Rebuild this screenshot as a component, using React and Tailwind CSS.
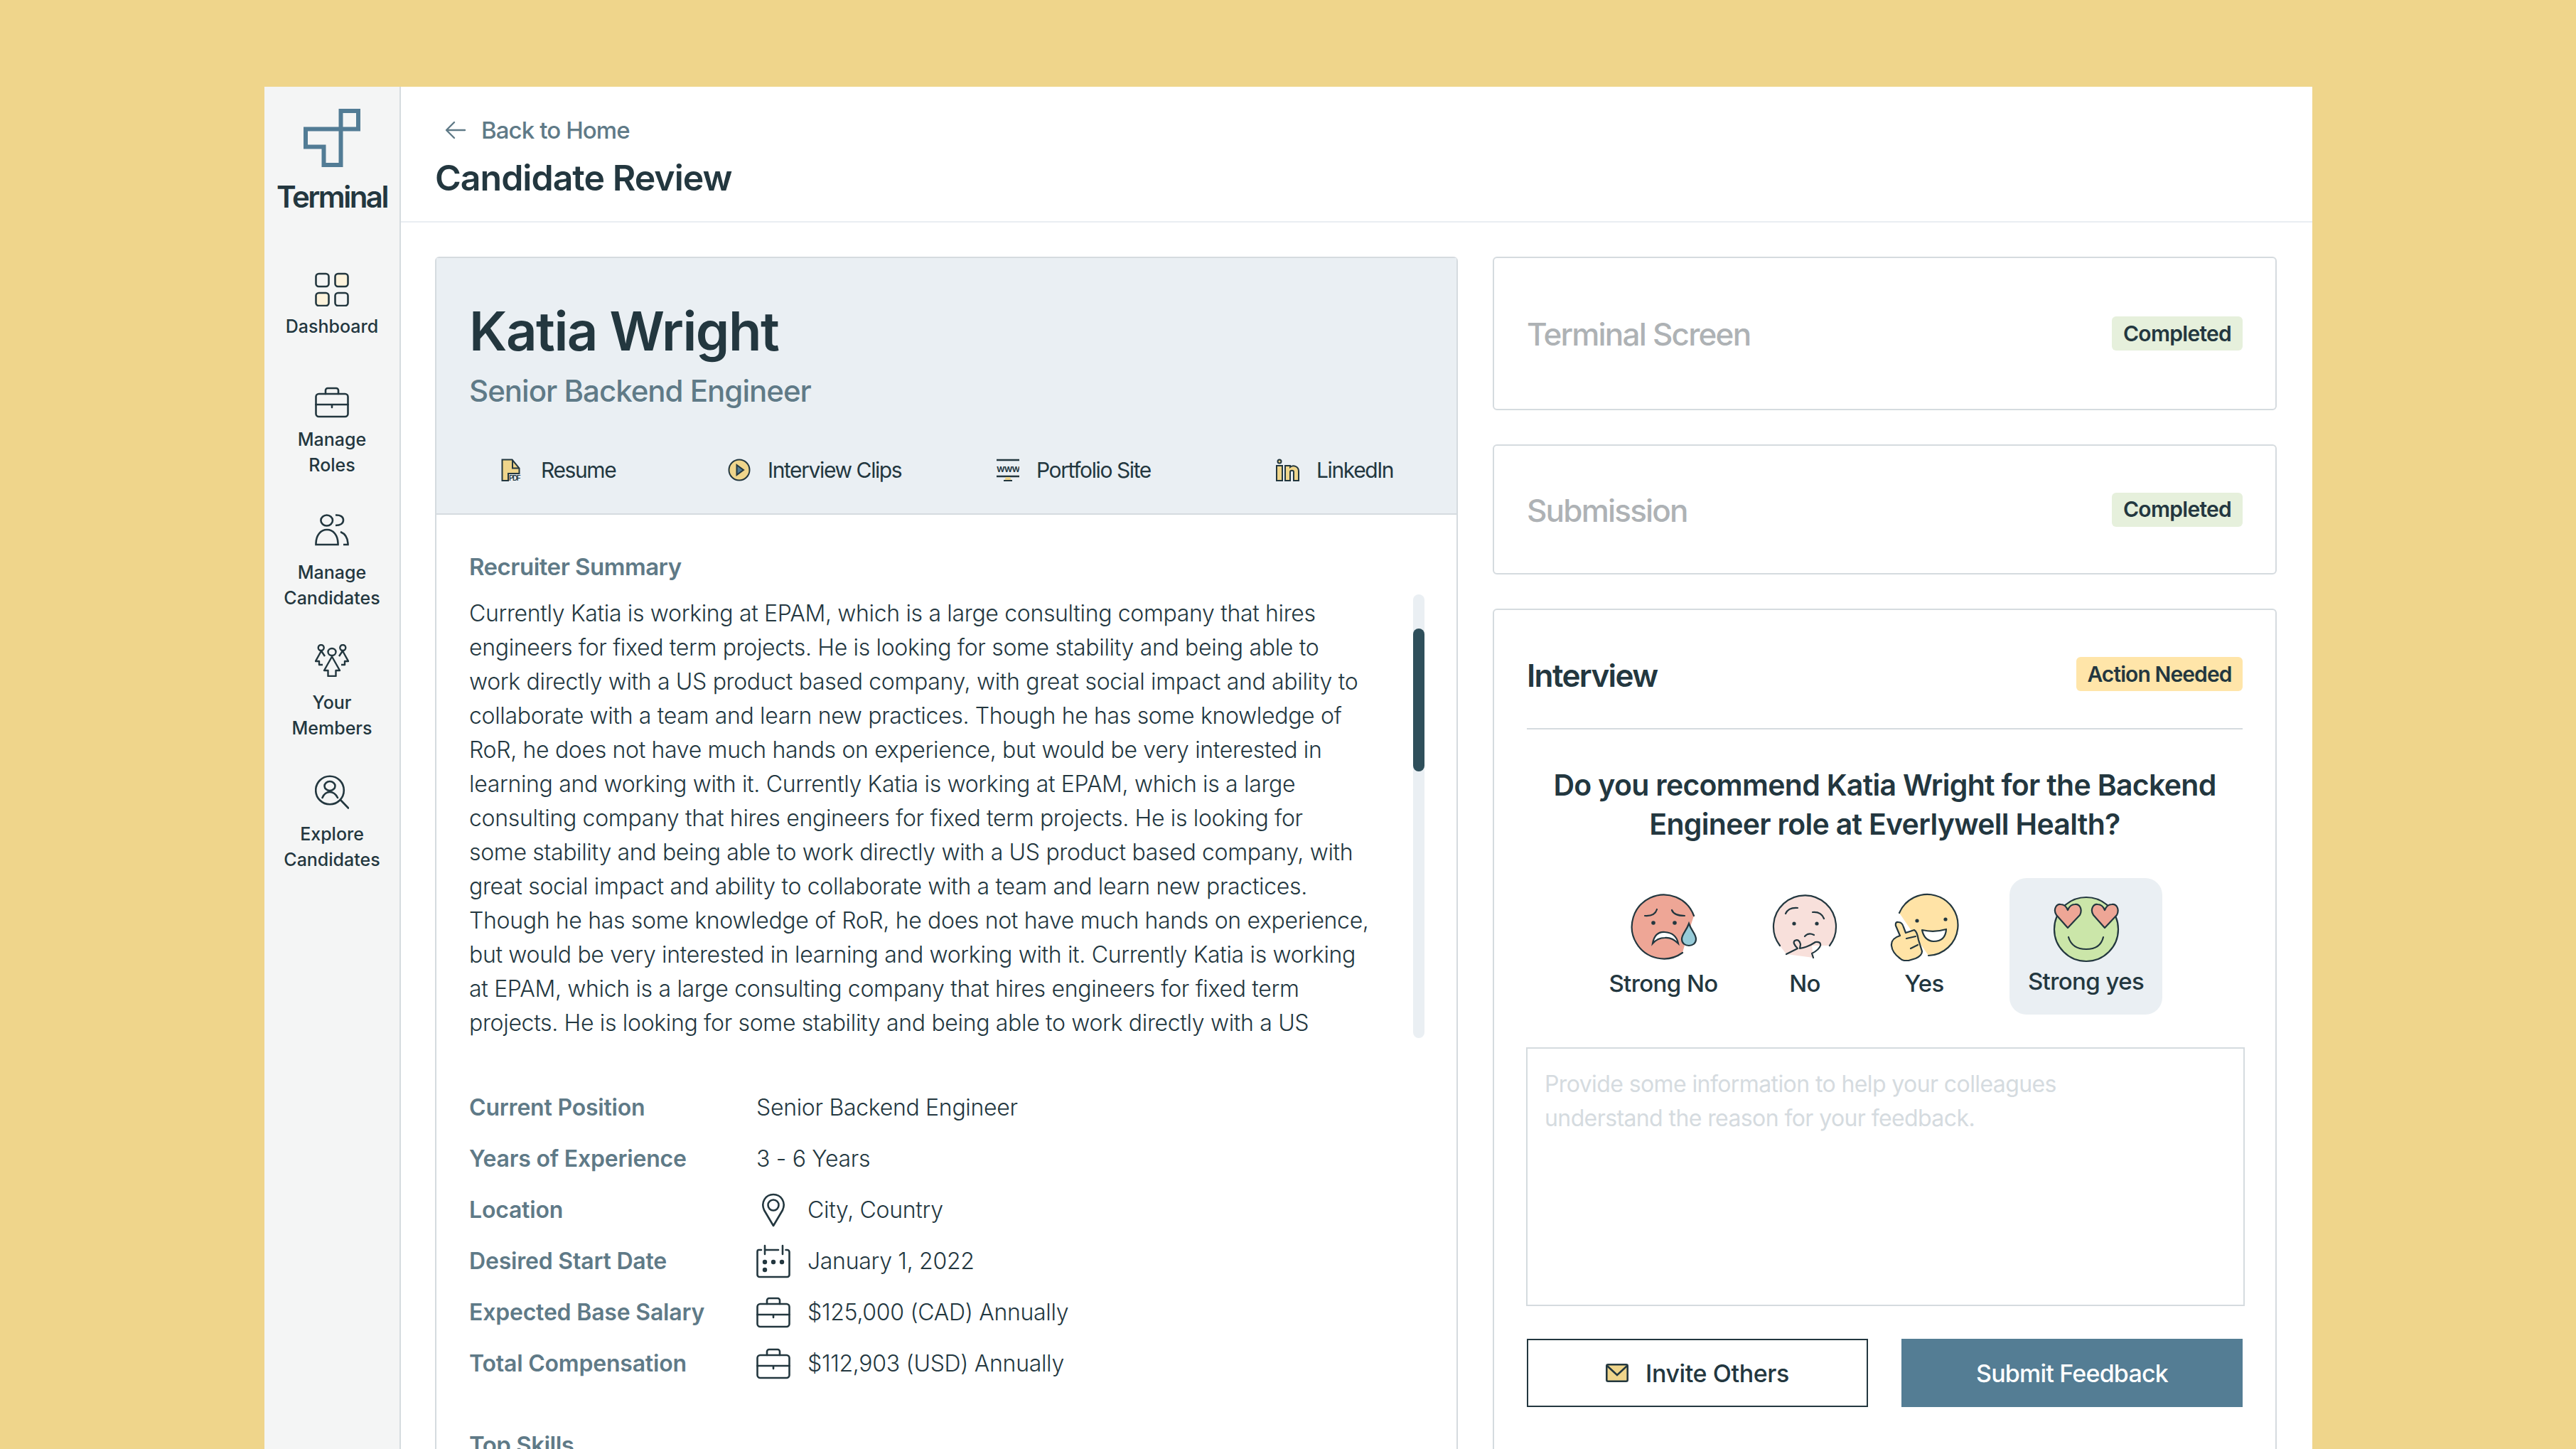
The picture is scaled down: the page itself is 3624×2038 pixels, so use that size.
const ink = '#23373f'
const yellow = '#efd58b'

const DashboardIcon = () => (
  <svg width="48" height="48" viewBox="0 0 48 48" fill="none" stroke={ink} strokeWidth="2.6">
    <rect x="1.5" y="2" width="18" height="18" rx="4" />
    <rect x="28.5" y="2" width="18" height="18" rx="4" fill="#fdf3dc" />
    <rect x="1.5" y="29" width="18" height="18" rx="4" fill="#fdf3dc" />
    <rect x="28.5" y="29" width="18" height="18" rx="4" />
  </svg>
)

const BriefcaseIcon = ({ size = 48 }) => (
  <svg width={size} height={size} viewBox="0 0 48 48" fill="none" stroke={ink} strokeWidth="2.6" strokeLinecap="round">
    <rect x="1.5" y="12" width="45" height="32" rx="4" />
    <path d="M15 12V7a3 3 0 0 1 3-3h12a3 3 0 0 1 3 3v5" />
    <path d="M1.5 27h45M24 27v4" />
  </svg>
)

const CandidatesIcon = () => (
  <svg width="48" height="46" viewBox="0 0 48 46" fill="none" stroke={ink} strokeWidth="2.6">
    <ellipse cx="16.7" cy="9" rx="8.300" ry="7.500" />
    <path d="M29 1.500C36 1 40 4 40 8.500S36 16 29 16" />
    <path d="M1.500 43V42C1.500 30 8 22 17 22S32.500 30 32.500 42V43Z" />
    <path d="M36 25C43 28 46.500 34 46.500 43H40" />
  </svg>
)

const MembersIcon = () => (
  <svg width="48" height="46" viewBox="0 0 48 46" fill="none" stroke={ink} strokeWidth="2.400" strokeLinejoin="round">
    <circle cx="8.700" cy="5" r="4" />
    <circle cx="39.300" cy="5" r="4" />
    <ellipse cx="24" cy="11" rx="5.500" ry="5" />
    <path d="M9 9.500 1 24H6V29H11M9 9.500 14 17" />
    <path d="M39 9.500 47 24H42V29H37M39 9.500 34 17" />
    <path d="M24 17.500 13 37H18.500V45H29.500V37H35Z" />
  </svg>
)

const ExploreIcon = () => (
  <svg width="48" height="48" viewBox="0 0 48 48" fill="none" stroke={ink} strokeWidth="2.600" strokeLinecap="round">
    <circle cx="21" cy="21.500" r="19.800" />
    <ellipse cx="21" cy="15.500" rx="7.500" ry="6.500" />
    <path d="M10.500 32C13 26 16 24 21 24S29 26 32 32" />
    <path d="M36 35 47 46.500" />
  </svg>
)

const Logo = () => (
  <svg width="80" height="82" viewBox="0 0 80 82" fill="none" stroke="#527c95" strokeWidth="6">
    <path d="M77 28.500V3H52.500V79H28.500V53.500H3V28.500Z" />
  </svg>
)

const BackArrow = () => (
  <svg width="30" height="26" viewBox="0 0 30 26" fill="none" stroke="#5f7a87" strokeWidth="2.400" strokeLinecap="round" strokeLinejoin="round">
    <path d="M28 13H3M13 2 2 13l11 11" />
  </svg>
)

const PdfIcon = () => (
  <svg width="32" height="32" viewBox="0 0 32 32" fill="none" stroke={ink} strokeWidth="2">
    <path d="M1.500 1.500h14l10 12V21H10v10H1.500z" fill={yellow} />
    <path d="M16 1.500v12h9" fill="none" />
    <text x="11" y="31" fontSize="10" fill={ink} stroke="none" fontFamily="Inter, sans-serif" fontWeight="600">PDF</text>
  </svg>
)

const PlayIcon = () => (
  <svg width="32" height="32" viewBox="0 0 32 32" stroke={ink} strokeWidth="2">
    <circle cx="16" cy="16" r="14.500" fill={yellow} />
    <path d="M12.500 9 22 16l-9.500 7z" fill="#527c95" />
  </svg>
)

const WwwIcon = () => (
  <svg width="32" height="32" viewBox="0 0 32 32" fill="none">
    <path d="M0 2h32M0 25h32" stroke={ink} strokeWidth="2.500" />
    <path d="M13 26h6l2 5H11z" fill={yellow} />
    <path d="M10 31h12" stroke={ink} strokeWidth="2" />
    <text x="16" y="19" textAnchor="middle" fontSize="14" letterSpacing="-1" fill={ink} fontFamily="Inter, sans-serif" fontWeight="600">www</text>
  </svg>
)

const InIcon = () => (
  <svg width="33" height="32" viewBox="0 0 33 32" stroke={ink} strokeWidth="2">
    <circle cx="5" cy="4" r="2.500" fill={yellow} />
    <rect x="1" y="10" width="8" height="21" fill={yellow} />
    <path d="M13 31V10h7v2c4-3 12-2 12 6v13h-7V19c0-3-5-3-5 0v12z" fill={yellow} />
  </svg>
)

const PinIcon = () => (
  <svg width="34" height="48" viewBox="0 0 34 48" fill="none" stroke={ink} strokeWidth="2.600" strokeLinejoin="round">
    <path d="M17 46 4 24C-1 13 6 2 17 2s18 11 13 22z" />
    <circle cx="17" cy="17" r="7.500" />
  </svg>
)

const CalendarIcon = () => (
  <svg width="48" height="48" viewBox="0 0 48 48" fill="none" stroke={ink} strokeWidth="2.600" strokeLinecap="round">
    <path d="M7 8H3a2 2 0 0 0-1.500 2v33a3 3 0 0 0 3 3h39a3 3 0 0 0 3-3V11a3 3 0 0 0-3-3h-2" />
    <path d="M12 2v12M12 8h19M37 2v12" />
    <g fill={ink} stroke="none">
      <circle cx="12" cy="25" r="3.200" />
      <circle cx="24" cy="25" r="3.200" />
      <circle cx="36" cy="25" r="3.200" />
      <circle cx="12" cy="36" r="3.200" />
    </g>
  </svg>
)

const MailIcon = () => (
  <svg width="32" height="26" viewBox="0 0 32 26" stroke={ink} strokeWidth="2.600">
    <rect x="1.300" y="1.300" width="29.400" height="23.400" rx="2" fill={yellow} />
    <path d="M2 3l14 13L30 3" fill="none" />
  </svg>
)

const StrongNoFace = () => (
  <svg width="100" height="100" viewBox="0 0 100 100" fill="none" stroke={ink} strokeWidth="2.200" strokeLinecap="round">
    <path d="M93 36A45 45 0 1 0 77 88L82 70Z" fill="#eea696" stroke="none" />
    <path d="M93 36A45 45 0 1 0 77 88" />
    <circle cx="36" cy="46" r="2.800" fill={ink} stroke="none" />
    <circle cx="66" cy="46" r="2.800" fill={ink} stroke="none" />
    <path d="M24 36Q38 37 41 27M62 28Q65 36 80 36" />
    <path d="M35 75Q38 58 52 59Q68 60 71 75Q62 66 52 67Q42 67 35 75Z" fill="#fff" />
    <path d="M86 47C82 58 76 62 76 69C76 75 81 78 86 78C91 78 96 75 96 69C96 62 90 58 86 47Z" fill="#97cbd8" />
  </svg>
)

const NoFace = () => (
  <svg width="100" height="100" viewBox="0 0 100 100" fill="none" stroke={ink} strokeWidth="2.200" strokeLinecap="round" strokeLinejoin="round">
    <path d="M15 78A44 44 0 1 1 85 78L60 78 62 95 24 90Z" fill="#f8e0db" stroke="none" />
    <path d="M15 78A44 44 0 1 1 85 78" />
    <circle cx="35" cy="47" r="2.600" fill={ink} stroke="none" />
    <circle cx="67" cy="47" r="2.600" fill={ink} stroke="none" />
    <path d="M23 33Q27 24 40 25M61 31Q73 30 77 40M50 65Q55 59 63 63" />
    <path d="M24 90L40 82Q32 74 36 71Q42 68 44 76L43 82Q55 80 65 73Q73 72 72 78Q70 84 60 89L62 95" />
  </svg>
)

const YesFace = () => (
  <svg width="100" height="100" viewBox="0 0 100 100" fill="none" stroke={ink} strokeWidth="2.200" strokeLinecap="round" strokeLinejoin="round">
    <path d="M15 32A43 43 0 1 1 56 92Z" fill="#ffe3a6" stroke="none" />
    <path d="M15 32A43 43 0 1 1 56 92" />
    <circle cx="40" cy="43" r="2.600" fill={ink} stroke="none" />
    <circle cx="80" cy="41" r="2.600" fill={ink} stroke="none" />
    <path d="M47 56Q64 60 81 55Q80 72 63 72Q50 71 47 56Z" fill="#fff" />
    <path d="M16 64L10 50Q9 44 14 45Q19 45 21 52L24 60L36 56Q40 58 42 70L47 86Q47 92 38 96L28 99Q20 100 16 96Q5 88 4 78Q3 68 16 64Z" fill="#ffe3a6" />
    <path d="M25 68L38 65M31 82L41 77" />
  </svg>
)

const Heart = ({ x }) => (
  <path
    transform={`translate(${x} 0)`}
    d="M24 48L8 30C3 22 8 14 14 15C19 15 22 18 24 23C26 18 29 15 34 15C41 14 45 22 41 30Z"
    fill="#eea696"
  />
)

const StrongYesFace = () => (
  <svg width="100" height="100" viewBox="0 0 100 100" fill="none" stroke={ink} strokeWidth="2.200" strokeLinecap="round" strokeLinejoin="round">
    <ellipse cx="50" cy="50" rx="45" ry="45" fill="#cbe6a9" />
    <Heart x={0} />
    <Heart x={52} />
    <path d="M25 61Q30 78 50 78Q70 78 74 61" />
  </svg>
)

const navItems = [
  { icon: <DashboardIcon />, lines: ['Dashboard'], spacing: 'mt-0', gap: 'mt-[10px]' },
  { icon: <BriefcaseIcon />, lines: ['Manage', 'Roles'], spacing: 'mt-[65px]', gap: 'mt-[10px]' },
  { icon: <CandidatesIcon />, lines: ['Manage', 'Candidates'], spacing: 'mt-[50px]', gap: 'mt-[17px]' },
  { icon: <MembersIcon />, lines: ['Your', 'Members'], spacing: 'mt-[46px]', gap: 'mt-[17px]' },
  { icon: <ExploreIcon />, lines: ['Explore', 'Candidates'], spacing: 'mt-[48px]', gap: 'mt-[17px]' },
]

const summary = [
  'Currently Katia is working at EPAM, which is a large consulting company that hires',
  'engineers for fixed term projects. He is looking for some stability and being able to',
  'work directly with a US product based company, with great social impact and ability to',
  'collaborate with a team and learn new practices. Though he has some knowledge of',
  'RoR, he does not have much hands on experience, but would be very interested in',
  'learning and working with it. Currently Katia is working at EPAM, which is a large',
  'consulting company that hires engineers for fixed term projects. He is looking for',
  'some stability and being able to work directly with a US product based company, with',
  'great social impact and ability to collaborate with a team and learn new practices.',
  'Though he has some knowledge of RoR, he does not have much hands on experience,',
  'but would be very interested in learning and working with it. Currently Katia is working',
  'at EPAM, which is a large consulting company that hires engineers for fixed term',
  'projects. He is looking for some stability and being able to work directly with a US',
]

const details = [
  { label: 'Current Position', value: 'Senior Backend Engineer' },
  { label: 'Years of Experience', value: '3 - 6 Years' },
  { label: 'Location', value: 'City, Country', icon: <PinIcon /> },
  { label: 'Desired Start Date', value: 'January 1, 2022', icon: <CalendarIcon /> },
  { label: 'Expected Base Salary', value: '$125,000 (CAD) Annually', icon: <BriefcaseIcon /> },
  { label: 'Total Compensation', value: '$112,903 (USD) Annually', icon: <BriefcaseIcon /> },
]

const links = [
  { icon: <PdfIcon />, label: 'Resume', width: 'w-[319px]' },
  { icon: <PlayIcon />, label: 'Interview Clips', width: 'w-[378px]' },
  { icon: <WwwIcon />, label: 'Portfolio Site', width: 'w-[393px]' },
  { icon: <InIcon />, label: 'LinkedIn', width: 'w-auto' },
]

const faces = [
  { face: <StrongNoFace />, label: 'Strong No', width: 'w-[200px]' },
  { face: <NoFace />, label: 'No', width: 'w-[198px]' },
  { face: <YesFace />, label: 'Yes', width: 'w-[138px]' },
]

const StepCard = ({ title, height }) => (
  <div className={`flex items-center justify-between rounded-[6px] border-2 border-[#d5dbdf] pr-[46px] pl-[46px] ${height}`}>
    <span className="pt-[2px] text-[44px] font-medium tracking-[-1.8px] text-[#aeb2b5]">{title}</span>
    <span className="flex h-[48px] w-[184px] items-center justify-center rounded-[6px] bg-[#e6f0dc] text-[30px] font-semibold tracking-[-0.7px] text-[#23373f]">
      Completed
    </span>
  </div>
)

export default function App() {
  return (
    <div className="h-[2038px] overflow-hidden bg-[#efd58b] pt-[122px] pl-[372px] pr-[371px] font-[Inter,sans-serif] text-[#23373f]">
      <div className="flex h-full overflow-hidden bg-white">
        <aside className="flex w-[192px] shrink-0 flex-col items-center border-r-2 border-[#d5dbdf] bg-[#f4f5f5] pt-[31px]">
          <Logo />
          <div className="mt-[19px] text-[42px] leading-[46px] font-semibold tracking-[-2.5px]">Terminal</div>
          <nav className="mt-[83px] flex flex-col items-center">
            {navItems.map((item) => (
              <div key={item.lines.join(' ')} className={`flex flex-col items-center ${item.spacing}`}>
                <div className="flex h-[48px] items-center">{item.icon}</div>
                <div className={`text-center text-[25px] leading-[36px] font-medium ${item.gap}`}>
                  {item.lines.map((line) => (
                    <div key={line}>{line}</div>
                  ))}
                </div>
              </div>
            ))}
          </nav>
        </aside>

        <main className="min-w-0 flex-1">
          <header className="h-[191px] border-b-2 border-[#e9eef2] pt-[38px] pl-[48px]">
            <div className="flex items-center pl-[14px] text-[#5f7a87]">
              <BackArrow />
              <span className="ml-[21px] text-[33px] leading-[46px] font-medium tracking-[-0.9px]">Back to Home</span>
            </div>
            <h1 className="mt-[12px] text-[50px] leading-[64px] font-semibold tracking-[-1px]">Candidate Review</h1>
          </header>

          <div className="flex gap-[49px] pt-[48px] pr-[50px] pl-[48px]">
            <section className="w-[1439px] shrink-0 rounded-t-[6px] border-2 border-[#d5dbdf]">
              <div className="h-[361px] border-b-2 border-[#d5dbdf] bg-[#eaeff3] pt-[56px]">
                <h2 className="pl-[46px] text-[76px] leading-[92px] font-semibold tracking-[-1.5px]">Katia Wright</h2>
                <p className="mt-[13px] pl-[46px] text-[42px] leading-[52px] font-medium tracking-[-1px] text-[#5f7a87]">Senior Backend Engineer</p>
                <div className="mt-[67px] flex pl-[91px]">
                  {links.map((link) => (
                    <div key={link.label} className={`flex items-center gap-[24px] text-[30px] leading-[36px] tracking-[-1.4px] ${link.width}`}>
                      {link.icon}
                      <span>{link.label}</span>
                    </div>
                  ))}
                </div>
              </div>

              <div className="px-[46px] pt-[50px]">
                <h3 className="text-[33px] leading-[46px] font-semibold tracking-[-0.5px] text-[#5f7a87]">Recruiter Summary</h3>
                <div className="relative mt-[19px] h-[624px]">
                  <div className="h-full overflow-hidden text-[32px] leading-[48px] font-[350] tracking-[-0.33px] whitespace-nowrap">
                    {summary.map((line) => (
                      <div key={line}>{line}</div>
                    ))}
                  </div>
                  <div className="absolute top-[-3px] right-[-1px] bottom-[3px] w-[16px] rounded-full bg-[#eaeff3]">
                    <div className="mt-[48px] h-[201px] rounded-full bg-[#2f4f5b]" />
                  </div>
                </div>

                <div className="mt-[71px] flex flex-col gap-[24px]">
                  {details.map((row) => (
                    <div key={row.label} className="flex h-[48px] items-center text-[32px] font-[350] tracking-[-0.3px]">
                      <span className="w-[404px] shrink-0 font-semibold tracking-[-0.2px] text-[#5f7a87]">{row.label}</span>
                      {row.icon && <span className="mr-[24px] flex w-[48px] justify-center">{row.icon}</span>}
                      <span>{row.value}</span>
                    </div>
                  ))}
                </div>

                <h3 className="mt-[67px] text-[33px] leading-[46px] font-semibold tracking-[-0.5px] text-[#5f7a87]">Top Skills</h3>
              </div>
            </section>

            <div className="flex min-w-0 flex-1 flex-col gap-[48px]">
              <StepCard title="Terminal Screen" height="h-[216px]" />
              <StepCard title="Submission" height="h-[183px]" />

              <section className="rounded-t-[6px] border-2 border-[#d5dbdf] pt-[66px] pr-[46px] pb-[60px] pl-[46px]">
                <div className="flex h-[48px] items-center justify-between">
                  <span className="pt-[3px] text-[44px] font-semibold tracking-[-1.6px]">Interview</span>
                  <span className="flex h-[48px] w-[234px] items-center justify-center rounded-[6px] bg-[#ffe5a9] text-[30px] font-semibold tracking-[-0.9px]">
                    Action Needed
                  </span>
                </div>
                <div className="mt-[52px] h-[2px] bg-[#d5dbdf]" />

                <p className="mt-[51px] text-center text-[41px] leading-[55px] font-semibold tracking-[-0.7px]">
                  Do you recommend Katia Wright for the Backend
                  <br />
                  Engineer role at Everlywell Health?
                </p>

                <div className="mt-[48px] ml-[92px] flex h-[192px]">
                  {faces.map((item) => (
                    <div key={item.label} className={`flex flex-col items-center pt-[17px] ${item.width}`}>
                      {item.face}
                      <span className="mt-[9px] text-[33px] leading-[44px] font-medium tracking-[-0.6px]">{item.label}</span>
                    </div>
                  ))}
                  <div className="ml-[51px] flex w-[215px] flex-col items-center rounded-[24px] bg-[#eaeff3] pt-[22px]">
                    <StrongYesFace />
                    <span className="mt-[1px] text-[33px] leading-[44px] font-medium tracking-[-0.6px]">Strong yes</span>
                  </div>
                </div>

                <textarea
                  readOnly
                  placeholder={'Provide some information to help your colleagues\nunderstand the reason for your feedback.'}
                  className="mt-[46px] -ml-[1px] block h-[364px] w-[1011px] resize-none border-2 border-[#d5dbdf] px-[24px] pt-[26px] pb-[24px] text-[32px] leading-[48px] tracking-[-0.6px] placeholder:text-[#d5dbdf]"
                />

                <div className="mt-[46px] flex justify-between">
                  <button className="flex h-[96px] w-[480px] items-center justify-center gap-[24px] border-2 border-[#23373f] text-[34px] font-medium tracking-[-0.4px]">
                    <MailIcon />
                    Invite Others
                  </button>
                  <button className="h-[96px] w-[480px] bg-[#547d94] text-[34px] font-medium tracking-[-0.8px] text-white">Submit Feedback</button>
                </div>
              </section>
            </div>
          </div>
        </main>
      </div>
    </div>
  )
}
